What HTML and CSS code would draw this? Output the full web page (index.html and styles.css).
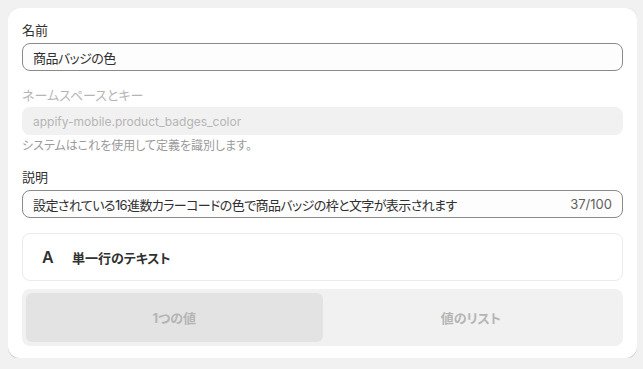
FILE: index.html
```html
<!DOCTYPE html>
<html lang="ja">
<head>
    <meta charset="UTF-8">
    <title>メタフィールド定義</title>
    <link rel="stylesheet" href="styles.css">
</head>
<body>
    <div class="card">
        <label class="label">名前</label>
        <div class="input"><span class="value">商品バッジの色</span></div>

        <label class="label label-muted">ネームスペースとキー</label>
        <div class="input input-disabled">appify-mobile.product_badges_color</div>
        <p class="help">システムはこれを使用して定義を識別します。</p>

        <label class="label label-gap">説明</label>
        <div class="input input-count">
            <span class="value">設定されている16進数カラーコードの色で商品バッジの枠と文字が表示されます</span>
            <span class="count">37/100</span>
        </div>

        <div class="type-box">
            <span class="type-icon">A</span>
            <span class="type-name">単一行のテキスト</span>
        </div>

        <div class="segment">
            <div class="seg-item seg-active">1つの値</div>
            <div class="seg-item">値のリスト</div>
        </div>
    </div>
</body>
</html>
```

FILE: styles.css
```css
body {
    margin: 8px 6px 8px 8px;
    background: #f1f1f1;
    font-family: "Inter", "Noto Sans CJK JP", sans-serif;
    font-size: 13px;
    font-feature-settings: "palt";
    color: #303030;
}
.card {
    background: #fff;
    border-radius: 12px;
    padding: 12px 14px 12px;
    box-shadow: 0 1px 0 rgba(0,0,0,0.12), 0 0 0 1px rgba(0,0,0,0.03);
}
.label {
    display: block;
    line-height: 20px;
    margin-bottom: 3px;
}
.label-muted {
    color: #b5b5b5;
    margin-top: 14px;
    margin-bottom: 2px;
}
.label-gap {
    margin-top: 13px;
}
.input {
    height: 28px;
    box-sizing: border-box;
    border: 1px solid #8a8a8a;
    border-radius: 8px;
    background: #fdfdfd;
    padding: 0 10px;
    display: flex;
    align-items: center;
    white-space: nowrap;
}
.value {
    letter-spacing: -0.6px;
}
.input-disabled {
    border-color: transparent;
    background: #f1f1f1;
    color: #b5b5b5;
    font-size: 12px;
}
.input-count {
    justify-content: space-between;
}
.count {
    color: #616161;
}
.help {
    margin: 3px 0 0;
    line-height: 16px;
    font-size: 12px;
    color: #9a9a9a;
}
.type-box {
    margin-top: 15px;
    height: 48px;
    box-sizing: border-box;
    border: 1px solid #ebebeb;
    border-radius: 8px;
    display: flex;
    align-items: center;
    padding-left: 19px;
}
.type-icon {
    font-size: 16px;
    font-weight: 600;
    width: 30px;
}
.type-name {
    font-weight: 600;
}
.segment {
    margin-top: 8px;
    height: 57px;
    box-sizing: border-box;
    background: #f1f1f1;
    border-radius: 8px;
    padding: 4px;
    display: flex;
}
.seg-item {
    flex: 1;
    display: flex;
    align-items: center;
    justify-content: center;
    color: #b5b5b5;
    font-weight: 700;
    border-radius: 6px;
}
.seg-active {
    background: #e3e3e3;
}
```
